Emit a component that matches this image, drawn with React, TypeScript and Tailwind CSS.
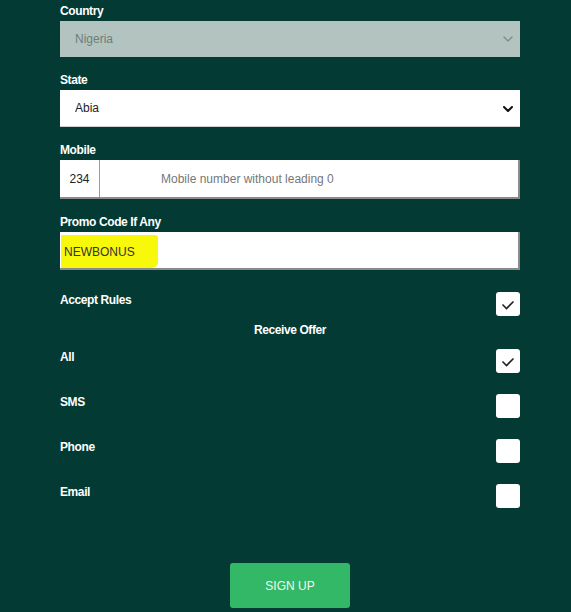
import React from "react";

const Chevron = ({ color, width }: { color: string; width: number }) => (
  <svg
    viewBox="0 0 10 6"
    className="pointer-events-none absolute right-[7px] top-1/2 h-[6px] w-[10px] -translate-y-1/2"
  >
    <polyline
      points="1,1 5,5 9,1"
      fill="none"
      stroke={color}
      strokeWidth={width}
      strokeLinecap="round"
      strokeLinejoin="round"
    />
  </svg>
);

const Check = ({ checked }: { checked?: boolean }) => (
  <div className="flex h-6 w-6 shrink-0 items-center justify-center rounded-[3px] bg-white">
    {checked && (
      <svg viewBox="0 0 24 24" className="h-6 w-6">
        <polyline
          points="6.5,12.5 10.5,16.5 17.5,9.5"
          fill="none"
          stroke="#222"
          strokeWidth="1.6"
        />
      </svg>
    )}
  </div>
);

const Label = ({ children }: { children: React.ReactNode }) => (
  <div className="mb-[2px] text-[12px] font-bold leading-4 tracking-[-0.4px] text-white">
    {children}
  </div>
);

const Row = ({
  label,
  checked,
  className = "",
}: {
  label: string;
  checked?: boolean;
  className?: string;
}) => (
  <div className={`flex items-start justify-between ${className}`}>
    <span className="text-[12px] font-bold leading-4 tracking-[-0.4px] text-white">
      {label}
    </span>
    <Check checked={checked} />
  </div>
);

export default function App() {
  return (
    <div className="min-h-screen bg-[#033a33] font-['Liberation_Sans',Arial,sans-serif]">
      <div className="ml-[60px] w-[460px] pt-[3px]">
        {/* Country */}
        <div className="mb-[15px]">
          <Label>Country</Label>
          <div className="relative h-[36px]">
            <select
              disabled
              className="h-full w-full appearance-none rounded-none bg-[#b3c4c0] pl-[15px] text-[12px] text-[#6e7e7a] outline-none"
            >
              <option>Nigeria</option>
            </select>
            <Chevron color="#7c8d89" width={1.3} />
          </div>
        </div>

        {/* State */}
        <div className="mb-[15px]">
          <Label>State</Label>
          <div className="relative h-[37px]">
            <select className="h-full w-full appearance-none rounded-none border-b border-[#cfcfcf] bg-white pl-[15px] text-[12px] text-[#222] outline-none">
              <option>Abia</option>
            </select>
            <Chevron color="#111" width={2} />
          </div>
        </div>

        {/* Mobile */}
        <div className="mb-[15px]">
          <Label>Mobile</Label>
          <div className="flex h-[39px] border-b-2 border-r-2 border-[#8a8a8a] bg-white">
            <div className="flex w-[40px] items-center justify-center border-r border-[#9a9a9a] text-[12px] text-[#222]">
              234
            </div>
            <input
              placeholder="Mobile number without leading 0"
              className="min-w-0 flex-1 bg-transparent pl-[61px] text-[12px] text-[#222] outline-none placeholder:text-[#777]"
            />
          </div>
        </div>

        {/* Promo */}
        <div>
          <Label>Promo Code If Any</Label>
          <div className="flex h-[38px] items-start border-b-2 border-r-2 border-[#8a8a8a] bg-white pl-px pt-[3px]">
            <span className="flex h-[33px] w-[97px] items-center rounded-br-[6px] rounded-tr-[3px] bg-[#f8f80a] pl-[3px] text-[12px] text-[#333]">
              NEWBONUS
            </span>
          </div>
        </div>

        <Row label="Accept Rules" checked className="mt-[22px]" />
        <div className="mt-[6px] text-center text-[12px] font-bold leading-4 tracking-[-0.4px] text-white">
          Receive Offer
        </div>
        <Row label="All" checked className="mt-[11px]" />
        <Row label="SMS" className="mt-[21px]" />
        <Row label="Phone" className="mt-[21px]" />
        <Row label="Email" className="mt-[21px]" />

        <button className="mx-auto mt-[55px] block h-[45px] w-[120px] rounded-[3px] bg-[#32b866] text-[12px] text-[#f0faf2]">
          SIGN UP
        </button>
      </div>
    </div>
  );
}
